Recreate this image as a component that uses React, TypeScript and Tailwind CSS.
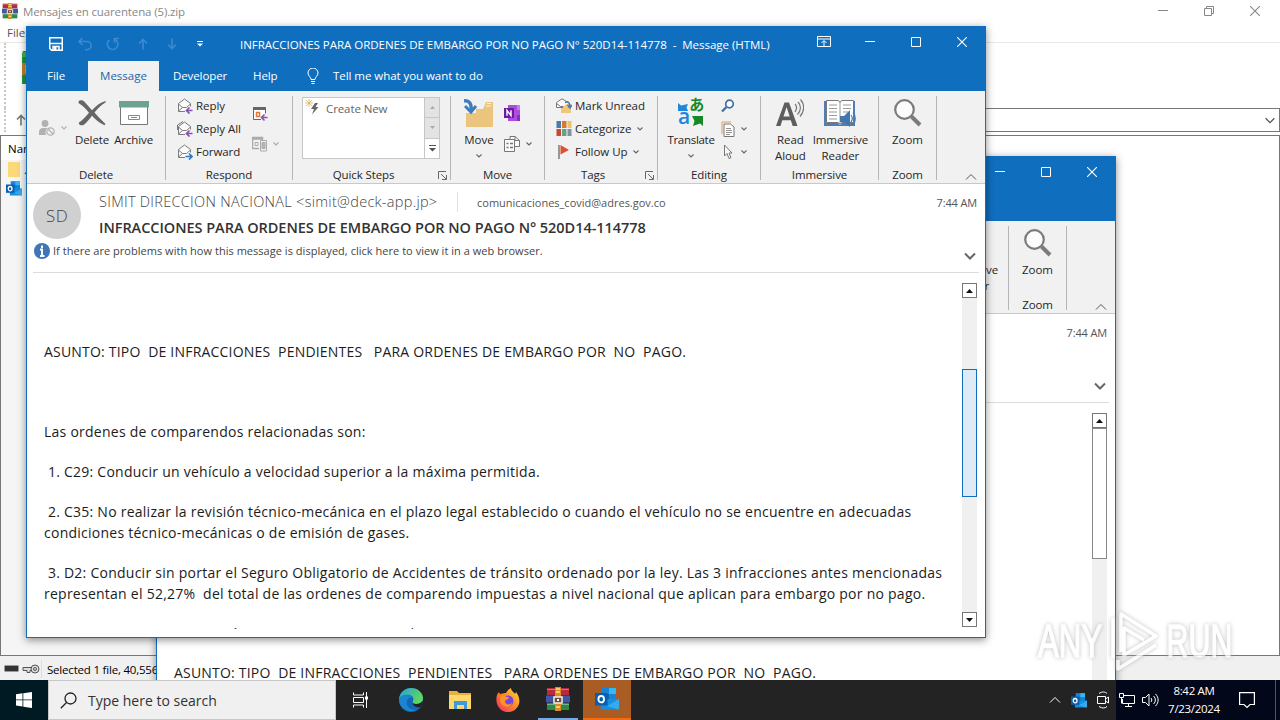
import { clsx } from 'clsx';
import type { ReactNode } from 'react';

function Chevron({ className }: { className?: string }) {
  return (
    <svg viewBox="0 0 6 4" className={clsx('h-1 w-1.5 shrink-0', className)} fill="none" stroke="currentColor" strokeWidth="1.1">
      <path d="M.5.5 3 3 5.500.5" />
    </svg>
  );
}

function WideChevron({ className }: { className?: string }) {
  return (
    <svg viewBox="0 0 12 8" className={clsx('h-2 w-3 shrink-0', className)} fill="none" stroke="currentColor">
      <path d="M1 1.500 6 6.500l5-5" />
    </svg>
  );
}

function SaveIcon() {
  return (
    <svg viewBox="0 0 14 14" className="h-3.5 w-3.5" fill="none" stroke="white" strokeWidth="1.5">
      <path d="M.75.75h12.500v12.500H2.500L.75 11.500z" />
      <path d="M1 6.500h12" />
      <path d="M4 13.500V9.500h6v4" />
      <path d="M5 10h2.500v3.500H5z" fill="white" stroke="none" />
    </svg>
  );
}

function UndoIcon() {
  return (
    <svg viewBox="0 0 14 14" className="h-3.5 w-3.5" fill="none" stroke="currentColor" strokeWidth="1.600">
      <path d="M4.500 1 1 4.500 4.500 8M1 4.500h8a3.800 3.800 0 0 1 0 8.200H7" />
    </svg>
  );
}

function RedoIcon() {
  return (
    <svg viewBox="0 0 14 14" className="h-3.5 w-3.5" fill="none" stroke="currentColor" strokeWidth="1.600">
      <path d="M8.500 1.500h4.500M8.500 1v4.500M9 2.500a5.300 5.300 0 1 1-5.500.4" />
    </svg>
  );
}

function ArrowIcon({ down = false }: { down?: boolean }) {
  return (
    <svg viewBox="0 0 10 12" className={clsx('h-3 w-2.5', down && 'rotate-180')} fill="none" stroke="currentColor" strokeWidth="1.600">
      <path d="M5 11.500V1.500M1 5.500l4-4 4 4" />
    </svg>
  );
}

function WindowButtons({ restore = false }: { restore?: boolean }) {
  return (
    <>
      <span className="flex h-full w-[46px] items-center justify-center">
        <svg viewBox="0 0 10 10" className="h-2.5 w-2.5" stroke="currentColor">
          <path d="M0 4.500h10" />
        </svg>
      </span>
      <span className="flex h-full w-[46px] items-center justify-center">
        <svg viewBox="0 0 10 10" className="h-2.5 w-2.5" fill="none" stroke="currentColor">
          {restore ? <path d="M.5 2.500h7v7h-7zM2.500 2.500v-2h7v7h-2" /> : <path d="M.5.5h9v9h-9z" />}
        </svg>
      </span>
      <span className="flex h-full w-[46px] items-center justify-center">
        <svg viewBox="0 0 10 10" className="h-2.5 w-2.5" fill="none" stroke="currentColor" strokeWidth="1.100">
          <path d="m0 0 10 10m0-10-10 10" />
        </svg>
      </span>
    </>
  );
}

function MailIcon({ kind }: { kind: 'reply' | 'all' | 'forward' }) {
  return (
    <svg viewBox="0 0 16 16" className="h-4 w-4 shrink-0" fill="none" stroke="#7a7a7a">
      <path d="M8 13.500H1.500v-8L7.500 1l6 4.500v3" fill="#fafafa" />
      <path d="m1.500 6 4 3.500h4l4-3.500M1.500 13l4-3.500" />
      {kind === 'all' && <path d="M.5 9V4L6 .5" />}
      {kind === 'forward' ? (
        <path d="M8.500 12.500h6.500m-3-3 3 3-3 3" stroke="#2f78c4" strokeWidth="1.700" />
      ) : (
        <path d="M15.500 12.500H9.500m3-3-3 3 3 3" stroke="#8a4fb5" strokeWidth="1.700" />
      )}
    </svg>
  );
}

function BlockSenderIcon() {
  return (
    <svg viewBox="0 0 16 16" className="h-4 w-4" fill="#b1b1b1">
      <circle cx="6" cy="3.500" r="3.400" />
      <path d="M0 15v-3c0-3 2-4 4-4h4.500c-2 1.500-2.500 4-1.500 7z" />
      <circle cx="11.500" cy="11.500" r="3.700" fill="#f1f1f1" stroke="#b1b1b1" strokeWidth="1.200" />
      <path d="m9 9 5 5" stroke="#b1b1b1" strokeWidth="1.200" />
    </svg>
  );
}

function DeleteIcon() {
  return (
    <svg viewBox="0 0 28 26" className="h-[26px] w-7" fill="#666">
      <path d="M1.500.5C5-.5 6 1 8 3.500l6 6.800C18 6 22 2.500 27.500 1l.3 1.200C23 5 19.500 8.500 16.500 12.500l4 4.500 7 7-1 1.200C21 23 17.500 19.500 14 15.800c-3 3.700-5.500 7.500-8.500 9.200-2.500 1-5.500-.5-4.500-2.500 3-2 7-6 10-9.800C8 9 5 6 .8 3.300.2 2.500.5 1 1.500.5z" />
    </svg>
  );
}

function ArchiveIcon() {
  return (
    <svg viewBox="0 0 30 26" className="h-[26px] w-[30px]">
      <path d="M1.500 6h27v18.500h-27z" fill="white" stroke="#777" />
      <path d="M0 1h30v6.500H0z" fill="#6da290" />
      <path d="M9.500 15.500h11v4h-11z" fill="none" stroke="#888" />
      <path d="M12 17.500h6" stroke="#888" />
    </svg>
  );
}

function MeetingIcon() {
  return (
    <svg viewBox="0 0 16 16" className="h-4 w-4" fill="none" stroke="#666">
      <path d="M9 13.500H1.500v-12h12v6" fill="white" />
      <path d="M1 2.500h13" strokeWidth="3" />
      <path d="M4.500 6.500h3v4h-3z" stroke="#e8743b" strokeWidth="1.500" />
      <path d="M15.500 11.500H9.500m3-3-3 3 3 3" stroke="#8a4fb5" strokeWidth="1.600" />
    </svg>
  );
}

function MoreRespondIcon() {
  return (
    <svg viewBox="0 0 16 16" className="h-4 w-4" fill="none" stroke="#aaa">
      <path d="M7 12.500H.5V1.500h10V4M.5 3h10" strokeWidth="1.500" />
      <path d="M3 6.500h3v3H3z" />
      <path d="M8.500 4.500h6v10.500h-6z" fill="#f1f1f1" />
      <path d="M10 6.500h3v6h-3z" fill="#b5b5b5" />
    </svg>
  );
}

function MoveIcon() {
  return (
    <svg viewBox="0 0 30 30" className="h-[30px] w-[30px]">
      <path d="M12 11h7l3-7h7v25H2V15h10z" fill="#ebc57e" />
      <path d="M23 5.500h4M22 8h5" stroke="#fff3d5" />
      <path d="M0 3c5-1 8 3 7 9" fill="none" stroke="#3d7cbd" strokeWidth="3.500" />
      <path d="m1 8 6 6 5-6" fill="none" stroke="#3d7cbd" strokeWidth="3" />
    </svg>
  );
}

function OneNoteIcon() {
  return (
    <svg viewBox="0 0 16 16" className="h-4 w-4">
      <path d="M4 0h12v16H4z" fill="#ae4be0" />
      <path d="M13 0h3v5h-3z" fill="#c779ee" />
      <path d="M13 10h3v6h-3z" fill="#8632b8" />
      <path d="M0 3h10v10H0z" fill="#6a1b9e" />
      <path d="M3 10.700V5.300l4 5.400V5.300" fill="none" stroke="white" strokeWidth="1.400" />
    </svg>
  );
}

function RulesIcon() {
  return (
    <svg viewBox="0 0 16 16" className="h-4 w-4" fill="none" stroke="#777">
      <path d="M6 3V.5h5l4.500 4v6H11" fill="#fafafa" />
      <path d="M.5 3.500h10v12H.5z" fill="#fafafa" />
      <path d="M2.500 7.500h2m1.500 0h3m-6.500 4h2m1.500 0h3" strokeWidth="1.600" />
      <path d="M11 .5v4h4.500" />
    </svg>
  );
}

function UnreadIcon() {
  return (
    <svg viewBox="0 0 16 16" className="h-4 w-4 shrink-0" fill="none">
      <path d="M5 8h3l1-2h6v9H5z" fill="#f2c57c" />
      <path d="M7 9.500H.5v-5L6 .8l6 3.500M.5 5.500l4 3h3" stroke="#777" fill="#fafafa" />
      <path d="M9 4.500c4-1.500 5 1 5 5m-2.500-2.500L14 10l2-3" stroke="#3d7cbd" strokeWidth="1.500" />
    </svg>
  );
}

function CategorizeIcon() {
  return (
    <svg viewBox="0 0 15 15" className="h-[15px] w-4 shrink-0">
      <path d="M0 0h4.500v7H0z" fill="#4b7ba8" />
      <path d="M5.500 0H10v7H5.500z" fill="#d87932" />
      <path d="M11 0h4v7h-4z" fill="#eac46c" />
      <path d="M0 8h4.500v7H0z" fill="#c94a2f" />
      <path d="M5.500 8H10v7H5.500z" fill="#6aa088" />
      <path d="M11 8h4v7h-4z" fill="#8190a3" />
    </svg>
  );
}

function FlagIcon() {
  return (
    <svg viewBox="0 0 16 16" className="h-4 w-4 shrink-0">
      <path d="M3 1v14" stroke="#666" strokeWidth="1.300" />
      <path d="M4.500 1 13 6l-8.500 4.500z" fill="#dc5034" />
    </svg>
  );
}

function TranslateIcon() {
  return (
    <span className="relative block h-7 w-[26px] font-['Open_Sans','Noto_Sans_CJK_JP',sans-serif] leading-none">
      <span className="absolute -top-0.5 right-0 text-[15px] font-bold text-[#17882a]">あ</span>
      <span className="absolute bottom-0.5 left-0 text-[21px] leading-[18px] font-semibold text-[#1e86dd]">a</span>
      <svg viewBox="0 0 26 28" className="absolute inset-0">
        <path d="M0 4l3 2.500L10 5 8.500 8.500 10 12H0z" fill="#1e86dd" />
        <path d="M14 17h11v10l-3-2.500-7 2.500 1.500-5z" fill="#17882a" />
      </svg>
    </span>
  );
}

function Magnifier({ small = false }: { small?: boolean }) {
  return small ? (
    <svg viewBox="0 0 14 14" className="h-3.5 w-3.5" fill="none" stroke="#3d72a8">
      <circle cx="8.500" cy="5" r="3.800" fill="#f8fbff" strokeWidth="1.700" />
      <path d="m5.500 8-4.500 4.500" strokeWidth="2.300" />
    </svg>
  ) : (
    <svg viewBox="0 0 28 28" className="h-7 w-7" fill="none" stroke="#7b7b7b">
      <circle cx="10.500" cy="10.500" r="9.300" fill="#fcfcfc" strokeWidth="2.200" />
      <path d="m17.500 17.500 8.500 8.500" strokeWidth="4" />
    </svg>
  );
}

function PageIcon() {
  return (
    <svg viewBox="0 0 14 16" className="h-4 w-3.5" fill="none">
      <path d="M10 1H1v12" stroke="#d3a35c" />
      <path d="M3 3h6.500L13 6v9.500H3z" fill="white" stroke="#777" />
      <path d="M5 7.500h5M5 9.500h6M5 11.500h6M5 13.500h4" stroke="#777" strokeWidth=".8" />
    </svg>
  );
}

function PointerIcon() {
  return (
    <svg viewBox="0 0 14 16" className="h-4 w-3.5" fill="#fafafa" stroke="#777">
      <path d="M3.500 1v11l2.500-2.500 2 5 2-.8-2-4.700H11z" />
    </svg>
  );
}

function ReadAloudIcon() {
  return (
    <svg viewBox="0 0 28 28" className="h-7 w-7">
      <path d="M0 27 8.500 3.500h4.500L21.500 27h-4.800l-1.900-5.800H6.300L4.500 27zM7.500 17.500h6.200L10.600 8z" fill="#5d5d5d" fillRule="evenodd" />
      <path d="M19 5c2 2 2 5 0 8M22 3c3.500 3.500 3 9-.5 12.500M24.500.5c4.500 5 4 12-.5 17" fill="none" stroke="#777" strokeWidth="1.200" />
    </svg>
  );
}

function ReaderIcon() {
  return (
    <svg viewBox="0 0 32 28" className="h-7 w-8" fill="none">
      <path d="M0 2h2v22h12l2 2 2-2h12V2h1v25H0z" fill="#4b7fb5" />
      <path d="M2.500 1.500H13c2 0 2.500 1 3 2 .5-1 1-2 3-2h10.500v22H18l-2 1.500-2-1.500H2.500z" fill="white" stroke="#777" />
      <path d="M16 3v21M5 6h8M5 9.500h8M5 13h8M5 16.500h8M5 20h8M19 6h8M19 9.500h8M19 13h5" stroke="#999" />
      <path d="M16 17h4l6-6v17l-6-5h-4z" fill="#3f78b0" />
      <path d="M27 16c1.500 2 1.500 5 0 7M29 13.500c3 3.500 3 9 0 12" stroke="#3f78b0" strokeWidth="1.200" />
    </svg>
  );
}

function OutlookIcon({ className }: { className?: string }) {
  return (
    <svg viewBox="0 0 24 22" className={clsx('shrink-0', className)}>
      <path d="M7 0h14v12H7z" fill="#1683d9" />
      <path d="M14 0h7v6h-7z" fill="#35b8f1" />
      <path d="M7 6h7v6H7z" fill="#0f63b5" />
      <path d="M5 11h19v9.500a1 1 0 0 1-1 1H6z" fill="#1490df" />
      <path d="m24 11-12 7 11 3.500 1-1z" fill="#38a9ec" />
      <path d="M0 5h12.500v12.500H0z" fill="#0a5eb0" />
      <ellipse cx="6.200" cy="11.200" rx="2.800" ry="3.200" fill="none" stroke="white" strokeWidth="1.900" />
    </svg>
  );
}

function RarIcon({ className }: { className?: string }) {
  return (
    <svg viewBox="0 0 24 24" className={clsx('shrink-0', className)}>
      <path d="M1 1h22v7H1z" fill="#b32b3d" />
      <path d="M0 8.500h24v7H0z" fill="#4156a6" />
      <path d="M1 16h22v7H1z" fill="#2b8b45" />
      <path d="M1 2.500h22M1 17.500h22" stroke="white" strokeOpacity=".35" />
      <path d="M9 0h6v24H9z" fill="#d98b28" />
      <path d="M10 2h4M10 5h4M10 20h4" stroke="#ffe27a" strokeWidth="1.500" />
      <path d="M8 10h8v6H8z" fill="#6a4a38" stroke="#f5efe4" strokeWidth="1.500" />
      <path d="M12 12v2" stroke="white" strokeWidth="2" />
    </svg>
  );
}

// Toolbar "Add" button, only its left edge shows beside the message window
function AddArchiveIcon() {
  return (
    <svg viewBox="0 0 36 36" className="mt-[7px] ml-4 h-9 w-9 shrink-0">
      <path d="M1 1h34v33H0V4z" fill="#23963a" />
      <path d="M1 2h34v5H0z" fill="#3fba4b" />
      <path d="M0 13h36v12H0z" fill="#b8862b" />
      <path d="M3 15h8v8H3z" fill="#f3b62e" />
    </svg>
  );
}

function LauncherIcon() {
  return (
    <svg viewBox="0 0 9 9" className="h-[9px] w-[9px]" fill="none" stroke="#666">
      <path d="M.5 8V.5H8M3 3l5 5M8.500 4v4.500H4" />
    </svg>
  );
}

function Group({ label, className, launcher, children }: { label: string; className: string; launcher?: boolean; children: ReactNode }) {
  return (
    <div className={clsx('flex h-[84px] shrink-0 flex-col border-r border-[#b5b5b5]', className)}>
      <div className="flex h-[71px] shrink-0 items-start">{children}</div>
      <div className="flex h-4 shrink-0 items-center leading-4">
        <span className="flex-1 text-center tracking-[-0.1px]">{label}</span>
        {launcher && (
          <span className="w-4 pl-1">
            <LauncherIcon />
          </span>
        )}
      </div>
    </div>
  );
}

function BigButton({ icon, label, arrow }: { icon: ReactNode; label: string; arrow?: boolean }) {
  return (
    <div className="flex flex-col items-center">
      <span className="flex h-9 items-center pb-[3px]">{icon}</span>
      <span className="text-center leading-4 whitespace-pre">{label}</span>
      {arrow && <Chevron className="mt-1.5 text-[#666]" />}
    </div>
  );
}

function SmallButton({ icon, label, arrow }: { icon: ReactNode; label?: string; arrow?: boolean }) {
  return (
    <div className="flex h-[23px] items-center gap-[3px] whitespace-nowrap">
      {icon}
      {label && <span className="tracking-[-0.05px]">{label}</span>}
      {arrow && <Chevron className="ml-[3px] text-[#666]" />}
    </div>
  );
}

function Ribbon() {
  return (
    <div className="flex h-[93px] border-b border-[#c9c9c9] bg-[#f1f1f1] pt-[5px] text-[11.5px] text-[#262626]">
      <Group label="Delete" className="w-[139px]">
        <div className="flex items-center gap-1.5 pt-6 pl-3 text-[#b1b1b1]">
          <BlockSenderIcon />
          <Chevron />
        </div>
        <div className="flex gap-[5px] pl-2 tracking-[-0.1px]">
          <BigButton icon={<DeleteIcon />} label="Delete" />
          <BigButton icon={<ArchiveIcon />} label="Archive" />
        </div>
      </Group>
      <Group label="Respond" className="w-[127px]">
        <div className="-mt-0.5 w-[75px] pl-[11px]">
          <SmallButton icon={<MailIcon kind="reply" />} label="Reply" />
          <SmallButton icon={<MailIcon kind="all" />} label="Reply All" />
          <SmallButton icon={<MailIcon kind="forward" />} label="Forward" />
        </div>
        <div className="flex flex-col gap-[7px] pt-1.5 pl-[11px]">
          <SmallButton icon={<MeetingIcon />} />
          <div className="flex h-[23px] items-center gap-[5px] text-[#aaa]">
            <MoreRespondIcon />
            <Chevron />
          </div>
        </div>
      </Group>
      <Group label="Quick Steps" className="w-[158px]" launcher>
        <div className="mt-px ml-[9px] flex h-[62px] w-[138px] border border-[#c6c6c6] bg-white">
          <div className="flex flex-1 items-start gap-[5px] pt-[3px] pl-0.5 leading-4 text-[#666]">
            <svg viewBox="0 0 16 16" className="-mt-0.5 h-4 w-4" fill="none">
              <path d="M4 0v8M0 4h8M1 1l6 6m0-6-6 6" stroke="#dbb45f" strokeWidth=".8" />
              <path d="m10 4-4 6h3l-2 5.500L13.500 8h-3L13 4z" fill="#666" />
            </svg>
            <span className="tracking-[-0.1px]">Create New</span>
          </div>
          <div className="flex w-[15px] flex-col border-l border-[#c6c6c6] text-[#555]">
            <span className="flex flex-1 items-center justify-center border-b border-[#c6c6c6] bg-[#e3e3e3] text-[#aaa]">
              <svg viewBox="0 0 5 3" className="w-[5px]" fill="currentColor"><path d="M0 3h5L2.500 0z" /></svg>
            </span>
            <span className="flex flex-1 items-center justify-center border-b border-[#c6c6c6] bg-[#e3e3e3] text-[#aaa]">
              <svg viewBox="0 0 5 3" className="w-[5px]" fill="currentColor"><path d="M0 0h5L2.500 3z" /></svg>
            </span>
            <span className="flex flex-1 items-center justify-center">
              <svg viewBox="0 0 7 7" className="w-[7px]" fill="currentColor"><path d="M0 0h7v1H0zM0 3h7L3.500 6.500z" /></svg>
            </span>
          </div>
        </div>
      </Group>
      <Group label="Move" className="w-[94px]">
        <div className="pl-[13px]">
          <BigButton icon={<MoveIcon />} label="Move" arrow />
        </div>
        <div className="flex flex-col gap-2 pt-[5px] pl-2.5">
          <SmallButton icon={<OneNoteIcon />} />
          <SmallButton icon={<RulesIcon />} arrow />
        </div>
      </Group>
      <Group label="Tags" className="w-[113px]" launcher>
        <div className="-mt-0.5 pl-[11px]">
          <SmallButton icon={<UnreadIcon />} label="Mark Unread" />
          <SmallButton icon={<CategorizeIcon />} label="Categorize" arrow />
          <SmallButton icon={<FlagIcon />} label="Follow Up" arrow />
        </div>
      </Group>
      <Group label="Editing" className="w-[103px]">
        <div className="w-[63px] pr-1 pl-[7px] tracking-[-0.3px]">
          <BigButton icon={<TranslateIcon />} label="Translate" arrow />
        </div>
        <div className="-mt-0.5">
          <SmallButton icon={<Magnifier small />} />
          <SmallButton icon={<PageIcon />} arrow />
          <SmallButton icon={<PointerIcon />} arrow />
        </div>
      </Group>
      <Group label="Immersive" className="w-[118px]">
        <div className="flex gap-[7px] pl-3.5 tracking-[-0.1px]">
          <BigButton icon={<ReadAloudIcon />} label={'Read\nAloud'} />
          <BigButton icon={<ReaderIcon />} label={'Immersive\nReader'} />
        </div>
      </Group>
      <Group label="Zoom" className="w-[58px]">
        <div className="flex-1">
          <BigButton icon={<Magnifier />} label="Zoom" />
        </div>
      </Group>
      <div className="flex flex-1 items-end justify-end pr-2 pb-0.5 text-[#555]">
        <WideChevron className="rotate-180" />
      </div>
    </div>
  );
}

function TitleBar() {
  return (
    <div className="h-16 bg-[#106ebe] text-[11.5px] text-white">
      <div className="flex h-[34px] items-center">
        <div className="flex w-[213px] items-center pl-[22px] text-[#3c8bd1]">
          <SaveIcon />
          <span className="ml-[15px]"><UndoIcon /></span>
          <span className="ml-3.5"><RedoIcon /></span>
          <span className="ml-[18px]"><ArrowIcon /></span>
          <span className="ml-[19px]"><ArrowIcon down /></span>
          <svg viewBox="0 0 7 7" className="ml-5 w-1.5" fill="white">
            <path d="M0 0h7v1.200H0zM0 3h7L3.500 6.500z" />
          </svg>
        </div>
        <div className="flex-1 pt-px tracking-[-0.025px] whitespace-pre">INFRACCIONES PARA ORDENES DE EMBARGO POR NO PAGO N° 520D14-114778  -  Message (HTML)</div>
        <div className="flex h-full items-center pb-1">
          <span className="flex w-[46px] justify-center">
            <svg viewBox="0 0 14 12" className="w-3.5" fill="none" stroke="white">
              <path d="M.5.5h13v10H.5zM.5 3h13M7 10V5M4.500 7 7 4.500 9.500 7" />
            </svg>
          </span>
          <WindowButtons />
        </div>
      </div>
      <div className="flex h-[30px] items-center">
        <span className="w-[61px] pl-5">File</span>
        <span className="flex h-full w-[71px] items-center justify-center bg-[#f1f1f1] text-[#2264a8]">Message</span>
        <span className="w-[67px] pl-3.5 tracking-[-0.1px]">Developer</span>
        <span className="w-[53px] pl-[27px] tracking-[-0.1px]">Help</span>
        <svg viewBox="0 0 12 16" className="ml-7 h-4 w-3" fill="none" stroke="white">
          <path d="M4 11.500C4 9 1 8 1 5a5 5 0 0 1 10 0c0 3-3 4-3 6.500zM4 13.500h4M4.500 15.500h3" />
        </svg>
        <span className="ml-3.5 tracking-[-0.05px]">Tell me what you want to do</span>
      </div>
    </div>
  );
}

function MessageHeader() {
  return (
    <div className="mx-1.5 flex h-[89px] flex-col border-b border-[#dcdcdc] text-[#555]">
      <div className="flex h-[57px] pt-[7px]">
        <div className="flex h-12 w-12 shrink-0 items-center justify-center rounded-full bg-[#d0d0d0] pt-px text-[17px] font-light tracking-wide text-[#444]">SD</div>
        <div className="ml-[18px] flex-1">
          <div className="flex h-[22px] items-center">
            <span className="w-[358px] text-[14.5px] font-light tracking-[0.29px] text-[#444]">SIMIT DIRECCION NACIONAL &lt;simit@deck-app.jp&gt;</span>
            <span className="h-5 border-l border-[#e0e0e0] pt-px pl-[19px] text-[11px] leading-5">comunicaciones_covid@adres.gov.co</span>
            <span className="ml-auto pt-0.5 pr-0.5 text-[11px] tracking-[-0.15px]">7:44 AM</span>
          </div>
          <div className="pt-1 text-[14.5px] leading-[22px] font-semibold tracking-[-0.04px] text-[#333]">
            INFRACCIONES PARA ORDENES DE EMBARGO POR NO PAGO N° 520D14-114778
          </div>
        </div>
      </div>
      <div className="flex h-5 items-center gap-[3px] pl-px">
        <svg viewBox="0 0 16 16" className="h-4 w-4">
          <circle cx="8" cy="8" r="8" fill="#3f76b3" />
          <path d="M8 2.500v2.500M6 6.500h2v6.500M6 13h4.500" stroke="white" strokeWidth="2" fill="none" />
        </svg>
        <span className="text-[11px] tracking-[0.03px] text-[#444]">If there are problems with how this message is displayed, click here to view it in a web browser.</span>
        <WideChevron className="mt-2.5 mr-[3px] ml-auto stroke-2 text-[#666]" />
      </div>
    </div>
  );
}

function ScrollButton({ down = false }: { down?: boolean }) {
  return (
    <span className="flex h-[15px] w-[15px] shrink-0 items-center justify-center border border-[#777] bg-white">
      <svg viewBox="0 0 7 4" className={clsx('w-[7px]', down && 'rotate-180')} fill="#111">
        <path d="M0 4h7L3.500 0z" />
      </svg>
    </span>
  );
}

const subject = 'ASUNTO: TIPO  DE INFRACCIONES  PENDIENTES   PARA ORDENES DE EMBARGO POR  NO  PAGO.';

const paragraphs = [
  'Las ordenes de comparendos relacionadas son:',
  ' 1. C29: Conducir un vehículo a velocidad superior a la máxima permitida.',
  ' 2. C35: No realizar la revisión técnico-mecánica en el plazo legal establecido o cuando el vehículo no se encuentre en adecuadas\ncondiciones técnico-mecánicas o de emisión de gases.',
  ' 3. D2: Conducir sin portar el Seguro Obligatorio de Accidentes de tránsito ordenado por la ley. Las 3 infracciones antes mencionadas\nrepresentan el 52,27%  del total de las ordenes de comparendo impuestas a nivel nacional que aplican para embargo por no pago.',
  'Gracias por su pronta revisión y su pago en curso, reciba',
];

function OutlookWindow({ scrolled }: { scrolled: boolean }) {
  return (
    <div className="h-[612px] w-[960px] border border-[#106ebe] bg-white shadow-[0_2px_8px_rgba(0,0,0,0.45)]">
      <TitleBar />
      <Ribbon />
      <MessageHeader />
      <div className="flex h-[356px] overflow-hidden pr-2">
        <div className={clsx('flex-1 pl-[17px] text-[14px] leading-[21px] text-[#1c1c1c]', scrolled ? 'pt-[68px]' : 'pt-[259px]')}>
          <p className="mb-[59px] tracking-[0.2px] whitespace-pre">{subject}</p>
          {scrolled &&
            paragraphs.map((text) => (
              <p key={text} className="mb-[19px] tracking-[0.25px] whitespace-pre first-of-type:tracking-[0.2px]">{text}</p>
            ))}
        </div>
        <div className="mt-2.5 flex h-[344px] w-[15px] flex-col bg-[#f0f0f0]">
          <ScrollButton />
          {scrolled ? (
            <div className="mt-[71px] h-32 border border-[#106ebe] bg-[#deebf7]" />
          ) : (
            <div className="h-[131px] border border-[#888] bg-white" />
          )}
          <span className="mt-auto"><ScrollButton down /></span>
        </div>
      </div>
    </div>
  );
}

function ArchiveWindow() {
  return (
    <div className="flex h-[680px] flex-col bg-white text-[11.5px]">
      <div className="flex h-[21px] items-center text-[#888]">
        <RarIcon className="mr-[5px] ml-0.5 h-4 w-4" />
        <span className="flex-1 pt-0.5 tracking-[-0.13px]">Mensajes en cuarentena (5).zip</span>
        <div className="flex h-full pr-0.5"><WindowButtons restore /></div>
      </div>
      <div className="h-[22px] border-b border-[#e8e8e8] pt-[3px] pl-[7px] text-[#555]">File</div>
      <div className="flex h-[65px] items-start pl-1">
        <span className="h-full border-l-2 border-dotted border-[#c8c8c8]" />
        <AddArchiveIcon />
      </div>
      <div className="flex h-6 items-center pl-1">
        <span className="h-full border-l-2 border-dotted border-[#c8c8c8]" />
        <span className="ml-2.5 text-[#777]"><ArrowIcon /></span>
        <span className="ml-5 flex h-6 flex-1 items-center justify-end border border-[#777] pr-[3px] text-[#555]">
          <WideChevron className="h-[7px] w-2.5 stroke-[1.5]" />
        </span>
      </div>
      <div className="mt-[3px] h-[521px] border border-[#777] text-black">
        <div className="h-6 pt-1 pl-[7px]">Name</div>
        <div className="h-[495px] w-[170px] bg-[#f5f5f5]">
          <div className="flex h-[19px] items-center pl-[7px]">
            <span className="h-[15px] w-3 bg-[#fbd878]" />
            <span className="pl-1">..</span>
          </div>
          <div className="flex h-[19px] items-center pl-[5px]"><OutlookIcon className="h-[15px] w-4" /></div>
        </div>
      </div>
      <div className="flex flex-1 items-center bg-[#f0f0f0] pt-0.5">
        <svg viewBox="0 0 36 12" className="ml-1 w-9" fill="none">
          <rect x=".5" y="2.500" width="14" height="6" rx="1" fill="#333" stroke="#999" />
          <path d="M19 4.500h9v3h-2v2h-3v-2h-4z" fill="#ddd" stroke="#555" />
          <circle cx="31" cy="6" r="4" fill="#ddd" stroke="#555" />
          <circle cx="31" cy="6" r="1.500" stroke="#555" />
        </svg>
        <span className="ml-px border-l border-[#ddd] pt-px pl-[5px] tracking-[-0.2px]">Selected 1 file, 40,556</span>
      </div>
    </div>
  );
}

function Watermark() {
  return (
    <div className="flex items-center font-['Liberation_Sans',sans-serif] text-[46px] leading-none text-white opacity-75 [filter:drop-shadow(0_0_2px_#aaa)] [-webkit-text-stroke:1.5px_white]">
      <span className="w-[68px] origin-left scale-x-[.68]">ANY</span>
      <svg viewBox="0 0 54 62" className="h-[62px] w-[54px]" fill="none" stroke="white" strokeWidth="3.500" strokeLinejoin="round">
        <path d="M15 42V4l35 22-32 19V18l20 12M7 8v40M12 50v9l38-24" />
      </svg>
      <span className="origin-left scale-x-[.66] pl-2.5">RUN</span>
    </div>
  );
}

function EdgeIcon() {
  return (
    <svg viewBox="0 0 24 24" className="h-6 w-6">
      <defs>
        <linearGradient id="edge-top" x1="0" y1="0" x2="1" y2=".5">
          <stop stopColor="#249fdf" />
          <stop offset="1" stopColor="#61d85b" />
        </linearGradient>
      </defs>
      <circle cx="12" cy="12" r="12" fill="#1268b5" />
      <path d="M0 11C1 4 6 0 12 0c7 0 12 5 12 10 0 4-3 6-7 6-3 0-4-1-3-3 2-4-3-7-7-6-3 0-6 2-7 4z" fill="url(#edge-top)" />
      <path d="M9 11c-4 5 1 12 9 11-9 4-18-2-18-11 2-4 7-5 9-4 2 0 4 2 4 3-2-1-3 0-4 1z" fill="#1c85d2" />
      <path d="M14 13c-1 2 0 3 3 3 3 0 5-1 6.500-3 .8 3-1 4.500-2 6-5 1-9-2-7.500-6z" fill="#232323" />
    </svg>
  );
}

function FolderIcon() {
  return (
    <svg viewBox="0 0 22 20" className="h-5 w-[22px]">
      <path d="M0 1h8l2 2h12v16H0z" fill="#e8b13d" />
      <path d="M0 5h22v14H0z" fill="#ffd86c" />
      <path d="M5 11h13v8h-3v-4H8v4H5z" fill="#3f9ad8" />
    </svg>
  );
}

function FirefoxIcon() {
  return (
    <svg viewBox="0 0 24 24" className="h-6 w-6">
      <defs>
        <linearGradient id="fox" x1="1" y1="0" x2="0" y2="1">
          <stop stopColor="#ffe43d" />
          <stop offset=".45" stopColor="#ff8a24" />
          <stop offset="1" stopColor="#f1296c" />
        </linearGradient>
      </defs>
      <path d="M3 4c0 1 1 2 2 2 2-1 3-1 5-1 1-2 3-4 5-5 0 3 3 4 4 6l1-2c3 4 4 8 3 12A11.500 11.500 0 0 1 1 16C0 11 0 7 3 4z" fill="url(#fox)" />
      <circle cx="12" cy="13" r="5.500" fill="#7448dd" />
      <path d="M4 8c3-1 5 0 7 1 1 0 2 0 2 1-1 2-4 1-4 4 1 3 5 3 7 1-1 5-9 5-11 0-1-2-1-4-1-7z" fill="#ff9227" />
    </svg>
  );
}

function Taskbar() {
  return (
    <div className="flex h-10 bg-[#232323] text-white">
      <div className="flex w-12 items-center justify-center bg-[#001a24]">
        <svg viewBox="0 0 16 16" className="h-4 w-4" fill="white">
          <path d="M0 2.200 6.500 1.300v6.200H0zM7.300 1.200 16 0v7.500H7.300zM0 8.300h6.500v6.200L0 13.600zM7.300 8.300H16V16l-8.700-1.200z" />
        </svg>
      </div>
      <div className="flex w-72 items-center border border-[#c8c8c8] bg-[#f0f0f0] pl-[11px] text-[#333]">
        <svg viewBox="0 0 17 17" className="h-[17px] w-[17px]" fill="none" stroke="#222" strokeWidth="1.300">
          <circle cx="10.500" cy="6.500" r="5.500" />
          <path d="M6.500 10.500.8 16.200" />
        </svg>
        <span className="ml-[11px] pt-0.5 text-sm">Type here to search</span>
      </div>
      <div className="flex w-[49px] items-center justify-center">
        <svg viewBox="0 0 16 16" className="h-4 w-4" fill="none" stroke="white">
          <path d="M.5.500v2.500h10V.5M.5 5.500h10v5H.5zM.5 15.500V13h10v2.500M13.500 0v16" />
          <path d="M12 4.500h3v3h-3z" fill="white" stroke="none" />
        </svg>
      </div>
      <div className="flex w-[51px] items-center justify-center"><EdgeIcon /></div>
      <div className="flex w-[47px] items-center justify-center"><FolderIcon /></div>
      <div className="flex w-[50px] items-center justify-center"><FirefoxIcon /></div>
      <div className="flex w-[50px] justify-center">
        <div className="flex w-10 items-center justify-center border-b-2 border-[#76a9e8]"><RarIcon className="h-6 w-6" /></div>
      </div>
      <div className="flex w-12 items-center justify-center border-b-2 border-[#f76a0c] bg-[#a95d25]">
        <OutlookIcon className="h-[22px] w-6" />
      </div>
      <div className="flex flex-1 items-center justify-end gap-2 pr-[5px]">
        <WideChevron className="mr-0.5 rotate-180" />
        <OutlookIcon className="h-[15px] w-4" />
        <svg viewBox="0 0 16 18" className="h-[18px] w-4" fill="none" stroke="white">
          <path d="M2.500 5.500h8v7h-8zM10.500 8l3-2v6l-3-2M4 2.500c3-2 6-2 8 0M4 15.500c3 2 6 2 8 0" />
        </svg>
      </div>
      <div className="flex w-[164px] items-center bg-[#020719]">
        <svg viewBox="0 0 16 14" className="ml-[3px] h-3.5 w-4" fill="none" stroke="white">
          <path d="M4 2.500h11.500v8H3.500V6M6 13.500h7M9.500 10.500v3M.5.5h4v4h-4zM2.500 4.500v6" />
        </svg>
        <svg viewBox="0 0 17 14" className="ml-[7px] h-3.5 w-[17px]" fill="none" stroke="white">
          <path d="M.5 4.500h3L7 1v12L3.500 9.500h-3zM9 5c1 1.200 1 3 0 4M11.500 3c2.500 2.500 2.500 5.500 0 8M13.500 1c3.500 3.500 3.500 8.500 0 12" />
        </svg>
        <div className="w-[70px] text-center text-[11.5px] leading-[18px] tracking-[-0.3px]">
          8:42 AM
          <br />
          7/23/2024
        </div>
        <svg viewBox="0 0 16 17" className="ml-2.5 h-[17px] w-4" fill="none" stroke="white" strokeWidth="1.200">
          <path d="M.6.6h14.800v11.900H11L8 15.500l-3-3H.6z" />
        </svg>
        <span className="mr-1 ml-auto h-full border-l border-[#555]" />
      </div>
    </div>
  );
}

export default function App() {
  return (
    <div className="relative h-[720px] w-[1280px] overflow-hidden bg-white font-['Open_Sans',sans-serif]">
      <ArchiveWindow />
      <div className="absolute top-[156px] left-[156px] z-10">
        <OutlookWindow scrolled={false} />
      </div>
      <div className="absolute top-[26px] left-[26px] z-20">
        <OutlookWindow scrolled />
      </div>
      <div className="absolute top-[610px] left-[1038px] z-30">
        <Watermark />
      </div>
      <div className="relative z-40">
        <Taskbar />
      </div>
    </div>
  );
}
